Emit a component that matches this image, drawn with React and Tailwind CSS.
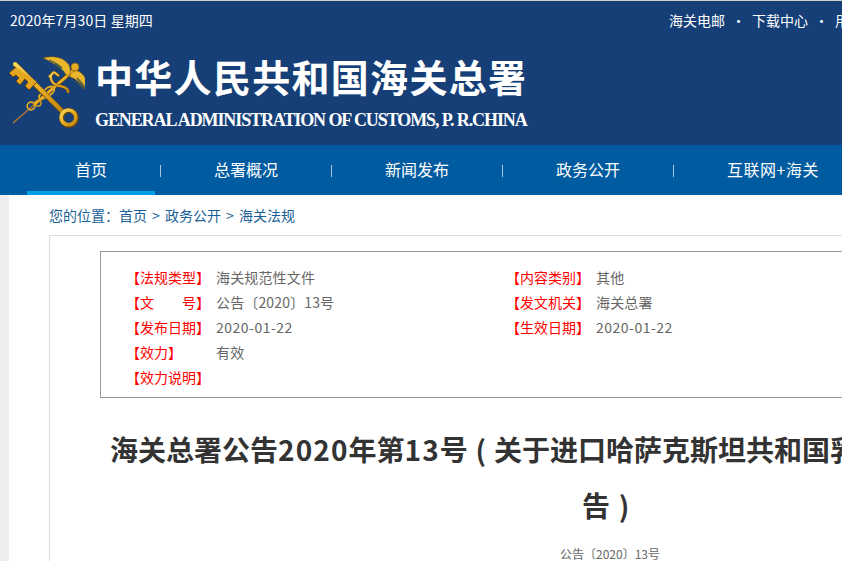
import React from "react";

const navItems = ["首页", "总署概况", "新闻发布", "政务公开", "互联网+海关"];

const metaRows = [
  [["【法规类型】", "海关规范性文件"], ["【内容类别】", "其他"]],
  [["【文　　号】", "公告〔2020〕13号"], ["【发文机关】", "海关总署"]],
  [["【发布日期】", "2020-01-22"], ["【生效日期】", "2020-01-22"]],
  [["【效力】", "有效"]],
  [["【效力说明】", ""]],
];

const CustomsLogo = () => (
  <svg width="80" height="80" viewBox="0 0 80 80" fill="none" className="shrink-0">
    <defs>
      <linearGradient id="gold" x1="0" y1="0" x2="1" y2="1">
        <stop offset="0" stopColor="#f8d65a" />
        <stop offset="0.55" stopColor="#e6aa20" />
        <stop offset="1" stopColor="#c08512" />
      </linearGradient>
    </defs>
    {/* wand */}
    <path d="M8 71 L30 52" stroke="#b9782a" strokeWidth="1.3" />
    <path d="M30 52 L70 17" stroke="#6d4508" strokeWidth="4" />
    <path d="M30 52 L70 17" stroke="#e9b02a" strokeWidth="2.8" />
    <circle cx="70" cy="15" r="4" fill="#e6ab22" stroke="#7a4e0a" strokeWidth="0.6" />
    {/* wings */}
    <path d="M38 6 C48 3 59 5 64 13 C66 18 66 22 62 24 C56 15 48 11 38 6 Z" fill="#eab62c" stroke="#6d4508" strokeWidth="0.5" />
    <path d="M44 8 C49 10 53 12 57 16 M50 12 C53 14 56 17 59 20" stroke="#3d5a48" strokeWidth="1.3" />
    <path d="M82 41 C84 31 80 22 73 19 C69 18 65 21 65 25 C72 27 78 33 82 41 Z" fill="#eab62c" stroke="#6d4508" strokeWidth="0.5" />
    <path d="M80 36 C78 32 75 29 72 26 M77 36 C75 33 73 31 70 29" stroke="#3d5a48" strokeWidth="1.3" />
    {/* serpents */}
    <path d="M49 20 C43 24 46 33 55 34 C60 35 64 37 63 41 M49 20 L44 25 M49 20 L54 24" stroke="#6d4508" strokeWidth="3" />
    <path d="M49 20 C43 24 46 33 55 34 C60 35 64 37 63 41 M49 20 L44 25 M49 20 L54 24" stroke="url(#gold)" strokeWidth="2" />
    <path d="M39 41 C40 35 47 33 49 36 C51 40 44 44 40 46 C34 49 32 44 36 42" stroke="#e2a925" strokeWidth="1.8" />
    <circle cx="26" cy="54" r="3.8" stroke="#e6ab22" strokeWidth="1.7" />
    <path d="M29 51 C33 47 37 49 36 52 C35 55 31 55 30 52" stroke="#d9a020" strokeWidth="1.5" />
    {/* key */}
    <path d="M10 12 L58 60" stroke="#6d4508" strokeWidth="5.2" strokeLinecap="round" transform="translate(0.6 0.8)" />
    <path d="M10 12 L58 60" stroke="url(#gold)" strokeWidth="4" strokeLinecap="round" />
    <path
      d="M11 15 L4 21 L8 25 L11 23 L14 26 L11 29 L15 33 L20 27 L23 30 L20 34 L24 38 L32 30"
      fill="#e2a71f"
      stroke="#6d4508"
      strokeWidth="1"
    />
    <circle cx="64" cy="66" r="7.4" stroke="#6d4508" strokeWidth="5" />
    <circle cx="63.5" cy="65.4" r="7.4" stroke="url(#gold)" strokeWidth="3.6" />
  </svg>
);

export default function App() {
  return (
    <div className="h-[561px] w-[842px] overflow-hidden bg-white font-['Noto_Sans_CJK_SC',sans-serif]">
      <div className="w-[1220px]">
        <header className="h-[145px] border-t border-[#cfcfcf] bg-[#163f78] text-white">
          <div className="flex h-[40px] items-center pb-[2px] pl-[10px] text-[14px]">
            <span className="w-[659px] tracking-[0.1px]">2020年7月30日 星期四</span>
            <span>海关电邮</span>
            <span className="w-[27px] text-center">·</span>
            <span>下载中心</span>
            <span className="w-[27px] text-center">·</span>
            <span>用户登录</span>
          </div>
          <div className="flex pl-[5px] pt-[11px]">
            <CustomsLogo />
            <div className="ml-[10px] pt-[5px]">
              <div className="text-[38px] font-bold leading-[44px] tracking-[1.3px] font-['Liberation_Serif','Noto_Sans_CJK_SC',serif]">
                中华人民共和国海关总署
              </div>
              <div className="mt-[9px] text-[18px] font-bold leading-[20px] tracking-[-1.1px] font-['Liberation_Serif',serif]">
                GENERAL ADMINISTRATION OF CUSTOMS, P. R.CHINA
              </div>
            </div>
          </div>
        </header>

        <nav className="flex h-[50px] bg-[#005ba1] pl-[27px] text-white">
          {navItems.map((item, i) => (
            <div key={item} className="flex items-center">
              <a className={`flex h-full items-center px-12 text-[16px] ${i === 0 ? "border-b-4 border-[#00a0e9] pt-[1px]" : "pb-[3px]"} ${i === 4 ? "tracking-[0.5px]" : ""}`}>
                {item}
              </a>
              {i < navItems.length - 1 && <span className="mx-[5px] mt-[2px] h-[12px] w-px bg-[#a9c6dc]" />}
            </div>
          ))}
        </nav>

        <main className="bg-[#eeeeee] px-[9px]">
          <div className="bg-white px-[40px] pb-[40px]">
            <div className="flex h-[40px] items-center text-[14px] text-[#1a5f96]">
              <span>您的位置：首页</span>
              <span className="w-[18px] text-center">&gt;</span>
              <span>政务公开</span>
              <span className="w-[18px] text-center">&gt;</span>
              <span>海关法规</span>
            </div>
            <section className="border border-[#dddddd] px-[50px] pt-[15px]">
              <div className="border border-[#999999] pb-[7px] pl-[25px] pt-[13px]">
                {metaRows.map((row, i) => (
                  <div key={i} className="flex h-[25px] items-center text-[14px]">
                    {row.map(([label, value]) => (
                      <div key={label} className="flex w-[380px]">
                        <span className="w-[90px] text-[#ff0000]">{label}</span>
                        <span className={`text-[#666666] ${value.startsWith("2020") ? "tracking-[0.5px]" : "tracking-[0.15px]"}`}>{value}</span>
                      </div>
                    ))}
                  </div>
                ))}
              </div>
              <h1 className="mt-[23px] text-center text-[28px] font-bold leading-[56px] whitespace-nowrap text-[#333333]">
                海关总署公告<span className="tracking-[1.1px]">2020</span>年第<span className="tracking-[1.1px]">13</span>号
                <span className="inline-block w-[26px] text-center">(</span>
                关于进口哈萨克斯坦共和国乳制品检验检疫要求公
                <br />
                告<span className="inline-block w-[28px] text-center">)</span>
              </h1>
              <p className="mt-[12px] text-center text-[12px] text-[#666666]">公告〔2020〕13号</p>
            </section>
          </div>
        </main>
      </div>
    </div>
  );
}
